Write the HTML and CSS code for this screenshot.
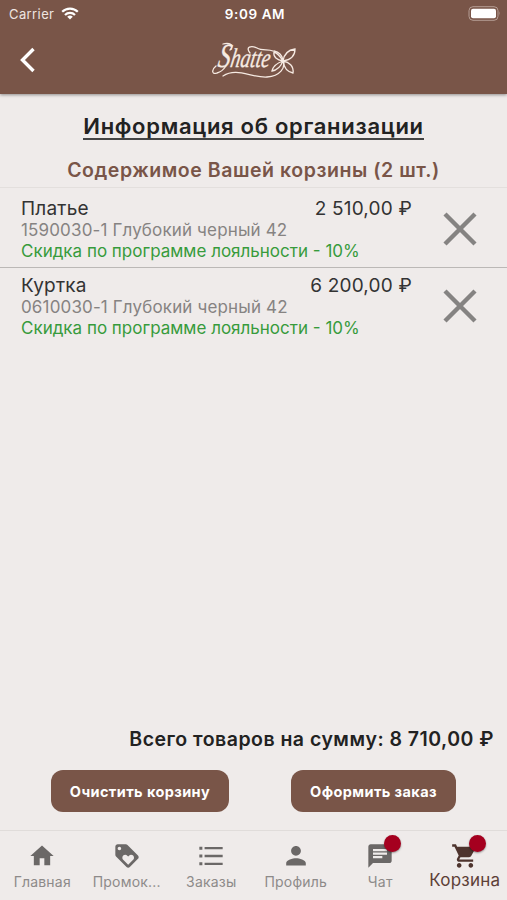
FILE: index.html
```html
<!doctype html>
<html lang="ru">

<head>
  <meta charset="utf-8">
  <title>Shatte - Корзина</title>
  <meta name="viewport" content="width=device-width, initial-scale=1">

  <link rel="stylesheet" href="styles.css">
</head>

<body>
  <header class="header">
    <div class="status-bar">
      <div class="carrier">
        <span>Carrier</span>
        <svg width="18" height="13" viewBox="0 0 18 13" fill="none" stroke="#fff" stroke-width="2.2">
          <path d="M1.2 4.8a11 11 0 0 1 15.600 0M4 7.900a7 7 0 0 1 10 0"/>
          <path d="M9 12.600L6.200 9.800a4 4 0 0 1 5.600 0z" fill="#fff" stroke="none"/>
        </svg>
      </div>
      <time class="clock">9:09 AM</time>
      <svg class="battery" width="33" height="15" viewBox="0 0 33 15">
        <rect x="1" y="0.700" width="29" height="13.600" rx="4" fill="none" stroke="#b59d94"/>
        <rect x="3" y="2.700" width="25" height="9.600" rx="2" fill="#fff"/>
        <path d="M31.300 5.300q1.500 2.200 0 4.400z" fill="#b59d94"/>
      </svg>
    </div>
    <div class="nav-bar">
      <a href="#" class="back" aria-label="Назад">
        <svg width="16" height="26" viewBox="0 0 16 26" fill="none" stroke="#fff" stroke-width="3.400">
          <path d="M14.500 2L3.500 13l11 11"/>
        </svg>
      </a>
      <svg class="logo" width="86" height="42" viewBox="0 0 86 42" fill="none" stroke="#f6eae2" stroke-width="1.300" stroke-linecap="round">
        <text class="logo-text" x="11" y="28" textLength="52" lengthAdjust="spacingAndGlyphs" transform="skewX(-10)"><tspan class="logo-initial">S</tspan>hatte</text>
        <path d="M19 11c5-5-1-8-7-6M5 27c-5 4-4 9 1 7 4-1 7-4 9-7M39 14c-5-6 1-8 7-5 5 3 11 1 16 3"/>
        <path d="M12 37c14-9 28 2 44 1 13-1 19-9 16-17-1-5-4-8-9-9"/>
        <path d="M72 22c1-7 5-11 12-12 0 7-5 11-12 12 6 1 11 5 10 12-5-1-9-5-10-12M72 22c-3-5-5-8-9-9-1 5 3 8 9 9-6 2-10 5-11 10 6-1 9-5 11-10"/>
      </svg>
    </div>
  </header>

  <main class="cart">
    <h1><a href="#">Информация об организации</a></h1>
    <h2>Содержимое Вашей корзины (2 шт.)</h2>

    <ul class="items">
      <li class="item">
        <div class="item-info">
          <div class="item-title"><span>Платье</span><span class="price">2 510,00 ₽</span></div>
          <p class="item-code">1590030-1 Глубокий черный 42</p>
          <p class="item-discount">Скидка по программе лояльности - 10%</p>
        </div>
        <button class="remove" aria-label="Удалить">
          <svg width="34" height="34" viewBox="0 0 34 34" stroke="#858382" stroke-width="4.400">
            <path d="M2 2l30 30M32 2L2 32"/>
          </svg>
        </button>
      </li>
      <li class="item">
        <div class="item-info">
          <div class="item-title"><span>Куртка</span><span class="price">6 200,00 ₽</span></div>
          <p class="item-code">0610030-1 Глубокий черный 42</p>
          <p class="item-discount">Скидка по программе лояльности - 10%</p>
        </div>
        <button class="remove" aria-label="Удалить">
          <svg width="34" height="34" viewBox="0 0 34 34" stroke="#858382" stroke-width="4.400">
            <path d="M2 2l30 30M32 2L2 32"/>
          </svg>
        </button>
      </li>
    </ul>

    <p class="total">Всего товаров на сумму: 8 710,00 ₽</p>
    <div class="actions">
      <button class="btn btn-clear">Очистить корзину</button>
      <button class="btn btn-order">Оформить заказ</button>
    </div>
  </main>

  <nav class="tabs">
    <a href="#" class="tab">
      <svg class="tab-icon" viewBox="0 0 24 24"><path d="M10 20v-6h4v6h5v-8h3L12 3 2 12h3v8z"/></svg>
      <span>Главная</span>
    </a>
    <a href="#" class="tab">
      <svg class="tab-icon" viewBox="0 0 24 24"><path d="M21.410 11.580l-9-9C12.050 2.220 11.550 2 11 2H4c-1.100 0-2 .9-2 2v7c0 .55.22 1.050.59 1.420l9 9c.36.36.86.58 1.410.58s1.050-.22 1.410-.59l7-7c.37-.36.59-.86.59-1.410s-.23-1.060-.59-1.420zM5.500 7C4.670 7 4 6.330 4 5.500S4.670 4 5.500 4 7 4.670 7 5.500 6.330 7 5.500 7zm11.770 8.270L13 19.540l-4.270-4.270C8.280 14.810 8 14.190 8 13.500c0-1.380 1.120-2.500 2.500-2.500.69 0 1.320.28 1.770.74l.73.72.73-.73c.45-.45 1.080-.73 1.770-.73 1.380 0 2.500 1.120 2.500 2.500 0 .69-.28 1.320-.73 1.770z"/></svg>
      <span>Промок...</span>
    </a>
    <a href="#" class="tab">
      <svg class="tab-icon" viewBox="0 0 24 24"><path d="M2 4h2.600v2.600H2zM2 10.700h2.600v2.600H2zM2 17.400h2.600V20H2zM6.500 4.300H22v2H6.500zM6.500 11H22v2H6.500zM6.500 17.700H22v2H6.500z"/></svg>
      <span>Заказы</span>
    </a>
    <a href="#" class="tab">
      <svg class="tab-icon" viewBox="0 0 24 24"><path d="M12 12c2.210 0 4-1.790 4-4s-1.790-4-4-4-4 1.790-4 4 1.790 4 4 4zm0 2c-2.670 0-8 1.340-8 4v2h16v-2c0-2.660-5.330-4-8-4z" transform="translate(-.6 -.8) scale(1.050)"/></svg>
      <span>Профиль</span>
    </a>
    <a href="#" class="tab">
      <svg class="tab-icon" viewBox="0 0 24 24"><path d="M20 2H4c-1.100 0-1.990.9-1.990 2L2 22l4-4h14c1.100 0 2-.9 2-2V4c0-1.100-.9-2-2-2zM6 9h12v2H6V9zm8 5H6v-2h8v2zm4-6H6V6h12v2z"/></svg>
      <i class="badge"></i>
      <span>Чат</span>
    </a>
    <a href="#" class="tab active">
      <svg class="tab-icon" viewBox="0 0 24 24"><path d="M7 18c-1.100 0-1.990.9-1.990 2S5.900 22 7 22s2-.9 2-2-.9-2-2-2zM1 2v2h2l3.600 7.590-1.350 2.450c-.16.28-.25.61-.25.96 0 1.100.9 2 2 2h12v-2H7.420c-.14 0-.25-.11-.25-.25l.03-.12.9-1.630h7.450c.75 0 1.410-.41 1.750-1.030l3.580-6.490c.08-.14.12-.31.12-.48 0-.55-.45-1-1-1H5.210l-.94-2H1zm16 16c-1.100 0-1.990.9-1.990 2s.89 2 1.990 2 2-.9 2-2-.9-2-2-2z"/></svg>
      <i class="badge"></i>
      <span>Корзина</span>
    </a>
  </nav>
</body>

</html>
```
FILE: styles.css
```css
* {
  box-sizing: border-box;
}

body {
  background: #efebea;
  color: #222;
  display: flex;
  flex-direction: column;
  font-family: Inter, "Liberation Sans", sans-serif;
  height: 100vh;
  margin: 0;
  overflow: hidden;
}

a {
  color: inherit;
  text-decoration: none;
}

button {
  border: 0;
  font-family: inherit;
  padding: 0;
}

svg {
  display: block;
  flex: none;
}

h1,
h2,
p,
ul {
  margin: 0;
  padding: 0;
}

.header {
  background: #795548;
  box-shadow: 0 1px 3px rgba(0, 0, 0, 0.4);
  color: #fff;
  height: 94px;
}

.status-bar {
  align-items: center;
  display: grid;
  grid-template-columns: 1fr auto 1fr;
  height: 26px;
  padding: 1px 6px 0 9px;
}

.carrier {
  align-items: center;
  color: #eee5e1;
  display: flex;
  font-size: 13px;
  gap: 7px;
  letter-spacing: 0.400px;
}

.clock {
  font-size: 13.500px;
  font-weight: 600;
  letter-spacing: 0.600px;
}

.battery {
  justify-self: end;
}

.nav-bar {
  align-items: center;
  display: grid;
  grid-template-columns: 1fr auto 1fr;
  height: 67px;
  padding: 0 19px;
}

.logo {
  overflow: visible;
}

.logo-text {
  fill: #f6eae2;
  font-family: "Liberation Serif", serif;
  font-size: 27px;
  font-style: italic;
  stroke-width: 0.300px;
}

.logo-initial {
  font-size: 34px;
}

.cart {
  display: flex;
  flex: 1;
  flex-direction: column;
}

h1 {
  font-size: 22px;
  font-weight: 600;
  letter-spacing: 0.700px;
  line-height: 26px;
  padding-top: 19px;
  text-align: center;
}

h1 a {
  border-bottom: 2px solid #444;
  display: inline-block;
  line-height: 24px;
}

h2 {
  color: #795548;
  font-size: 19.500px;
  font-weight: 600;
  letter-spacing: 0.550px;
  line-height: 24px;
  padding: 18px 0 5px;
  text-align: center;
}

.items {
  border-top: 1px solid #e3dfdd;
  flex: 1;
  list-style: none;
}

.item {
  display: flex;
  height: 77px;
  padding-left: 21px;
}

.item + .item {
  border-top: 1px solid #bbb8b6;
}

.item:first-child {
  height: 79px;
  padding-top: 3px;
}

.item-info {
  padding-top: 6px;
  width: 391px;
}

.item-title {
  color: #333;
  display: flex;
  font-size: 19px;
  justify-content: space-between;
  letter-spacing: 0.200px;
  line-height: 23px;
}

.item-code,
.item-discount {
  font-size: 17px;
  line-height: 21px;
}

.item-code {
  color: #868382;
  letter-spacing: 0.150px;
}

.item-discount {
  color: #379b3c;
}

.remove {
  align-self: center;
  background: none;
  margin-left: 31px;
}

.total {
  font-size: 19.500px;
  font-weight: 600;
  letter-spacing: 0.480px;
  line-height: 24px;
  padding-right: 13px;
  text-align: right;
}

.actions {
  display: flex;
  justify-content: space-between;
  padding: 19px 51px 18px;
}

.btn {
  background: #795548;
  border-radius: 12px;
  color: #fff;
  font-size: 14.500px;
  font-weight: 700;
  height: 42px;
  letter-spacing: 0.400px;
}

.btn-clear {
  width: 178px;
}

.btn-order {
  width: 165px;
}

.tabs {
  border-top: 1px solid #e0dcda;
  color: #8d8a89;
  display: grid;
  grid-template-columns: repeat(6, 1fr);
  height: 70px;
}

.tab {
  align-items: center;
  display: flex;
  flex-direction: column;
  font-size: 14px;
  letter-spacing: 0.200px;
  line-height: 18px;
  padding-top: 11px;
  position: relative;
  white-space: nowrap;
}

.tab-icon {
  fill: #6b6867;
  height: 28px;
  margin-bottom: 3px;
  width: 28px;
}

.active {
  color: #5d4037;
  font-size: 17px;
}

.active .tab-icon {
  fill: #4e342e;
  margin-bottom: 1px;
}

.badge {
  background: #a5001f;
  border-radius: 50%;
  box-shadow: 0 1px 2px rgba(0, 0, 0, 0.4);
  height: 17px;
  left: 46px;
  position: absolute;
  top: 4px;
  width: 17px;
}
```
